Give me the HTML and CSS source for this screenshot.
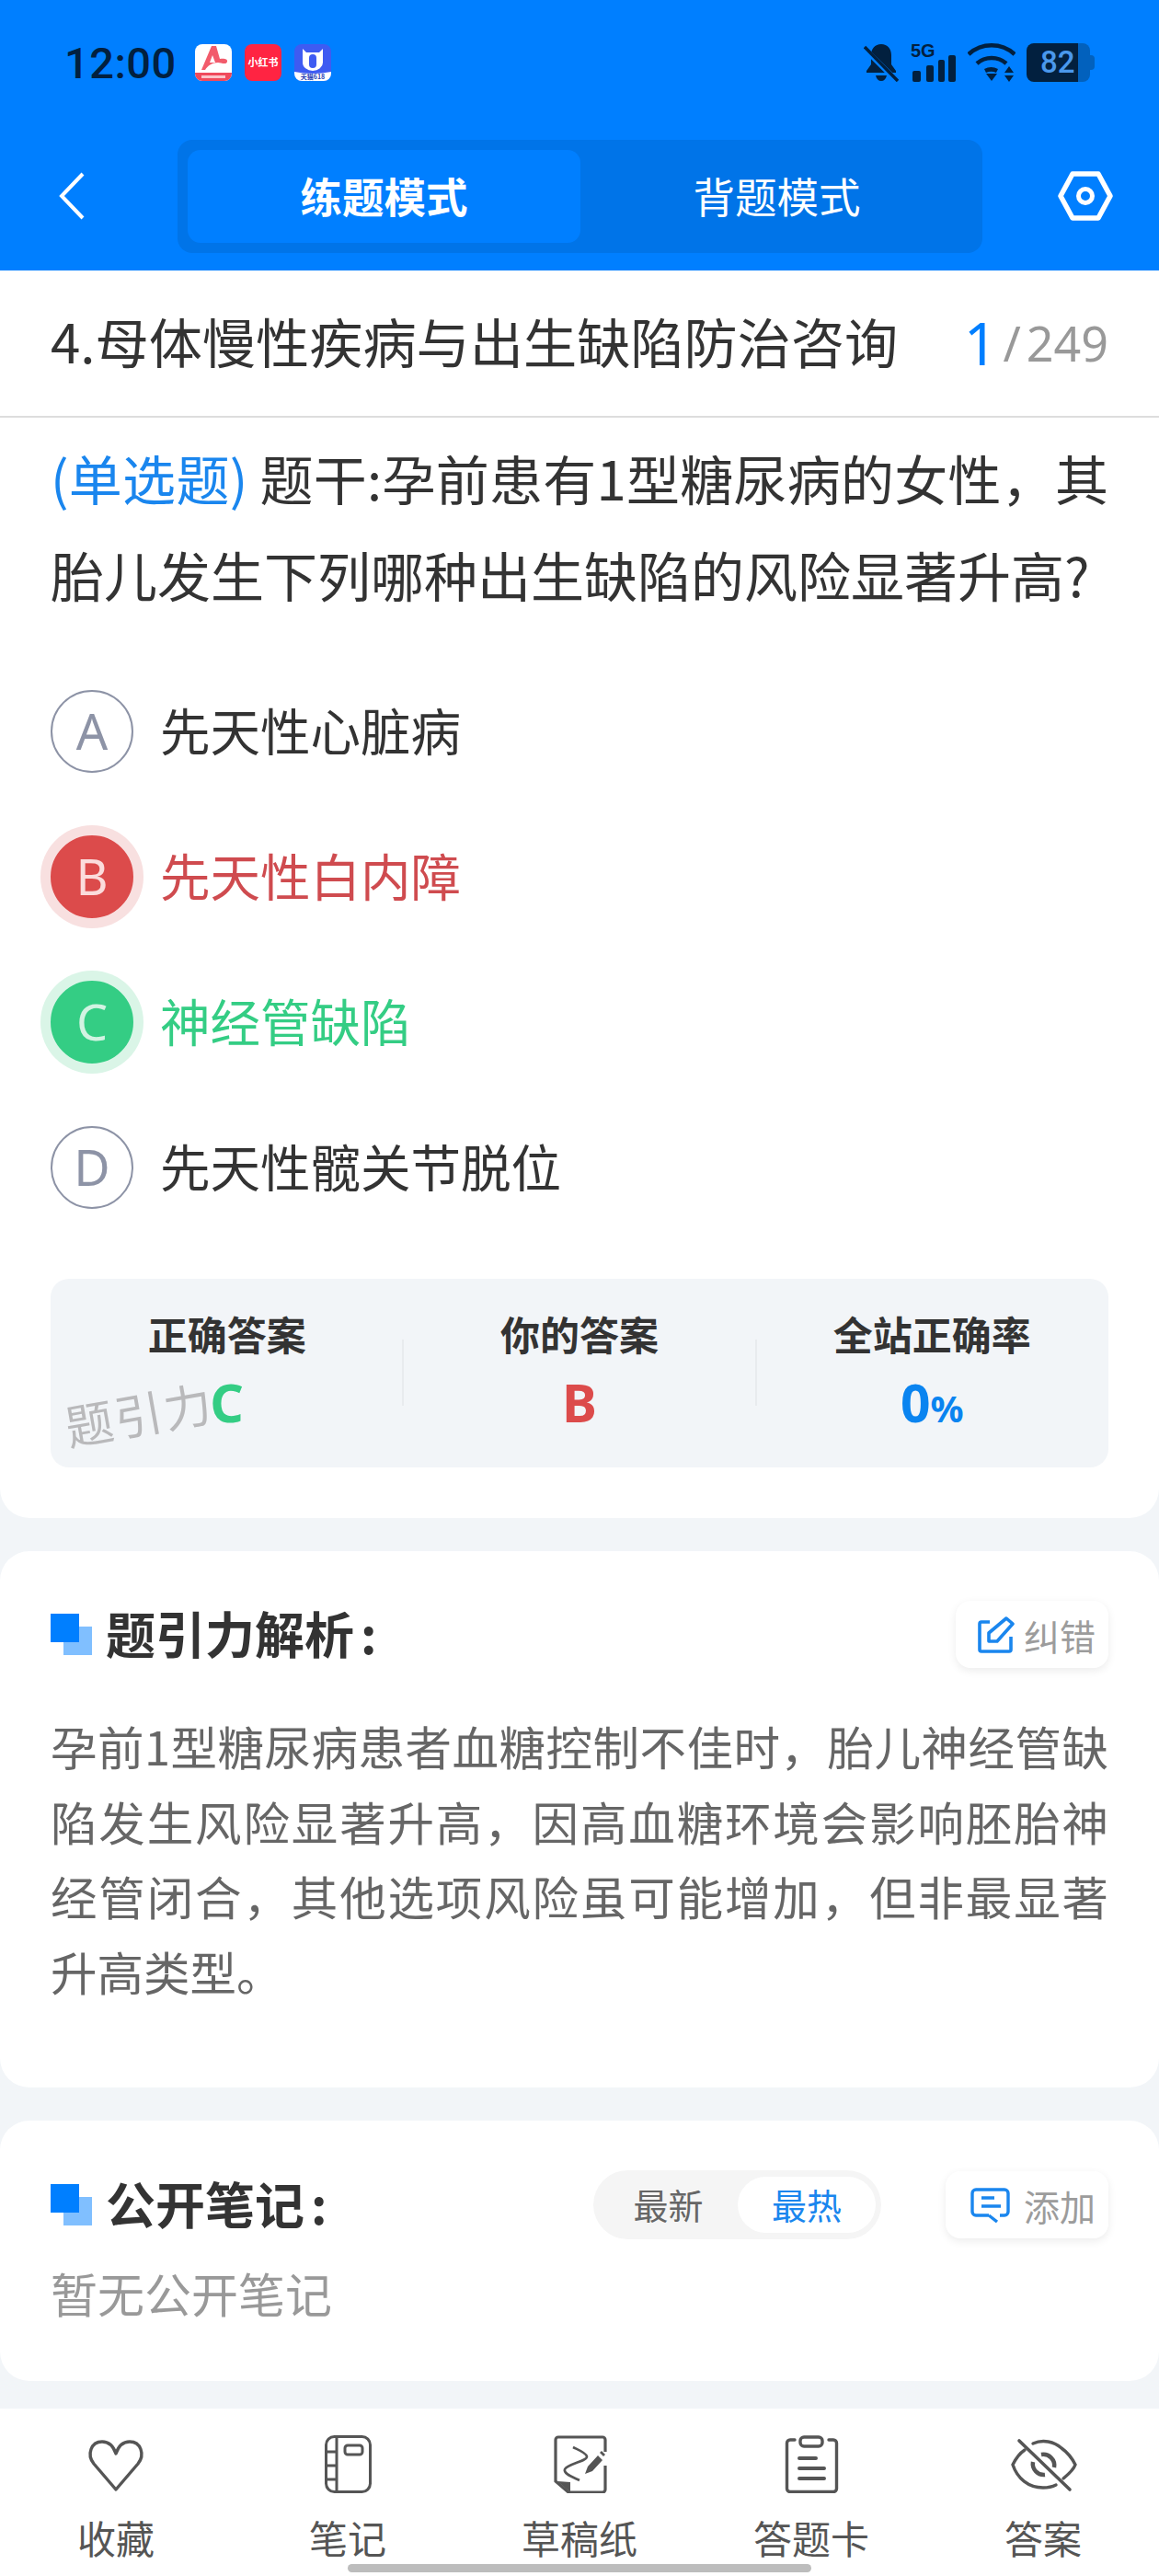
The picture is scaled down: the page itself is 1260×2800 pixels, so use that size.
FILE: index.html
```html
<!DOCTYPE html>
<html lang="zh">
<head>
    <meta charset="UTF-8">
    <meta name="viewport" content="width=device-width, initial-scale=1.0">
    <title>题引力</title>
    <link rel="stylesheet" href="styles.css">
</head>
<body>
    <div class="phone">
        <header class="top">
            <div class="status">
                <span class="time">12:00</span>
                <div class="app-icons">
                    <svg class="app" viewBox="0 0 40 40"><rect width="40" height="40" rx="8" fill="#fff"/><path d="M0 31h40v1a8 8 0 0 1-8 8H8a8 8 0 0 1-8-8z" fill="#f04a5c"/><path d="M7 28 18 2h5l4 14c4-1 9 0 8 3-1 4-7 1-10 1-6 0-11 3-14 8zM19 12l-3 8h6z" fill="#f25b6b" fill-rule="evenodd"/><path d="M7 35.500h26" stroke="#fbc4ca" stroke-width="3"/></svg>
                    <svg class="app" viewBox="0 0 40 40"><rect width="40" height="40" rx="8" fill="#ff2442"/><text x="20" y="24" class="app-label">小红书</text></svg>
                    <svg class="app" viewBox="0 0 40 40"><rect width="40" height="40" rx="8" fill="#3e5bf2"/><path d="M0 30q20 4 40 0v2a8 8 0 0 1-8 8H8a8 8 0 0 1-8-8z" fill="#fff"/><path d="M9 5l4 4h14l4-4v15a11 9 0 0 1-22 0z" fill="#fff"/><rect x="16" y="11" width="8" height="15" rx="4" fill="#3e5bf2"/><text x="20" y="38" class="app-tag">天猫618</text></svg>
                </div>
                <div class="sys-icons">
                    <svg class="bell" viewBox="0 0 38 42"><path d="M19 1c7 0 11 5 11 12v10l5 7v2H3v-2l5-7V13c0-7 4-12 11-12zM13 35h12c-1 4-3 6-6 6s-5-2-6-6z" fill="#02203f"/><path d="M2 7l35 35" stroke="#007fff" stroke-width="6"/><path d="M1 4l36 37" stroke="#02203f" stroke-width="3.400"/></svg>
                    <div class="signal">
                        <span class="net">5G</span>
                        <svg viewBox="0 0 47 29"><rect x="0" y="17" width="9" height="12" rx="2"/><rect x="15" y="11" width="8" height="18" rx="2"/><rect x="28" y="5" width="7" height="24" rx="2"/><rect x="39" y="0" width="8" height="29" rx="2"/></svg>
                    </div>
                    <svg class="wifi" viewBox="0 0 52 42"><g fill="none" stroke="#02203f" stroke-width="4.500"><path d="M1 12c14-13 36-13 50 0"/><path d="M10 22c9-8 23-8 32 0"/><path d="M19 30c4-2 9-2 13 0"/></g><path d="M20 33h12l-6 8zM40 32l5-7 5 7zM40 35h10l-5 7z" fill="#02203f"/></svg>
                    <div class="battery"><span class="level">82</span><span class="rest"></span></div>
                </div>
            </div>
            <div class="mode-bar">
                <svg class="back" viewBox="0 0 28 52"><path d="M26 2 3 26l23 24" fill="none" stroke="#fff" stroke-width="4"/></svg>
                <div class="mode-tabs">
                    <div class="mode-tab on">练题模式</div>
                    <div class="mode-tab">背题模式</div>
                </div>
                <svg class="gear" viewBox="0 0 60 54"><path d="M16 3h28l13 24-13 24H16L3 27z" fill="none" stroke="#fff" stroke-width="5.500" stroke-linejoin="round"/><circle cx="30" cy="27" r="7.500" fill="none" stroke="#fff" stroke-width="5"/></svg>
            </div>
        </header>

        <main class="content">
            <section class="card question-card">
                <div class="chapter">
                    <h1>4.母体慢性疾病与出生缺陷防治咨询</h1>
                    <div class="count"><b>1</b><i>/</i>249</div>
                </div>
                <p class="stem"><span class="type">(单选题)</span> 题干:孕前患有1型糖尿病的女性，其胎儿发生下列哪种出生缺陷的风险显著升高?</p>
                <ul class="options">
                    <li class="option"><span class="letter">A</span><span class="option-text">先天性心脏病</span></li>
                    <li class="option wrong"><span class="letter">B</span><span class="option-text">先天性白内障</span></li>
                    <li class="option right"><span class="letter">C</span><span class="option-text">神经管缺陷</span></li>
                    <li class="option"><span class="letter">D</span><span class="option-text">先天性髋关节脱位</span></li>
                </ul>
                <div class="stats">
                    <div class="stat">
                        <div class="stat-name">正确答案</div>
                        <div class="stat-value green">C</div>
                        <span class="watermark">题引力</span>
                    </div>
                    <div class="stat">
                        <div class="stat-name">你的答案</div>
                        <div class="stat-value red">B</div>
                    </div>
                    <div class="stat">
                        <div class="stat-name">全站正确率</div>
                        <div class="stat-value blue">0<small>%</small></div>
                    </div>
                </div>
            </section>

            <section class="card analysis-card">
                <div class="card-head">
                    <h2><span class="mark"></span><span class="head-text">题引力解析<span class="colon">:</span></span></h2>
                    <button class="small-btn">
                        <svg class="fix-icon" viewBox="0 0 40 40"><path d="M13 6H4a2 2 0 0 0-2 2v28a2 2 0 0 0 2 2h30a2 2 0 0 0 2-2V22" fill="none" stroke="#1a86ee" stroke-width="3.600"/><path d="M12 27V18L31 2l7 6-17 19z" fill="none" stroke="#1a86ee" stroke-width="3.600" stroke-linejoin="round"/></svg>
                        纠错
                    </button>
                </div>
                <p class="analysis">孕前1型糖尿病患者血糖控制不佳时，胎儿神经管缺陷发生风险显著升高，因高血糖环境会影响胚胎神经管闭合，其他选项风险虽可能增加，但非最显著升高类型。</p>
            </section>

            <section class="card notes-card">
                <div class="card-head">
                    <h2><span class="mark"></span><span class="head-text">公开笔记<span class="colon">:</span></span></h2>
                    <div class="sort">
                        <span>最新</span>
                        <span class="on">最热</span>
                    </div>
                    <button class="small-btn add-btn">
                        <svg class="add-icon" viewBox="0 0 43 38"><path d="M20 30H6a4 4 0 0 1-4-4V6a4 4 0 0 1 4-4h31a4 4 0 0 1 4 4v20a4 4 0 0 1-4 4h-5M20 30l9 7" fill="none" stroke="#1a86ee" stroke-width="3.400"/><path d="M12 11h14M12 20h21" stroke="#1a86ee" stroke-width="3.400"/></svg>
                        添加
                    </button>
                </div>
                <p class="empty">暂无公开笔记</p>
            </section>
        </main>

        <nav class="tabbar">
            <div class="tab">
                <svg viewBox="0 0 64 64"><path d="M32 60 8 32C0 22 5 8 17 8c7 0 12 4 15 13 3-9 8-13 15-13 12 0 17 14 9 24z" fill="none" stroke="#555" stroke-width="3.400" stroke-linejoin="round"/></svg>
                <span>收藏</span>
            </div>
            <div class="tab">
                <svg viewBox="0 0 64 64"><rect x="8.500" y="2.500" width="48" height="60" rx="9" fill="none" stroke="#555" stroke-width="3"/><path d="M20 3v59M9 19h11M9 34h11M9 49h11" stroke="#555" stroke-width="3"/><rect x="29" y="12" width="19" height="10" rx="3" fill="none" stroke="#555" stroke-width="3"/></svg>
                <span>笔记</span>
            </div>
            <div class="tab">
                <svg viewBox="0 0 64 64"><path d="M60 19V6a3 3 0 0 0-3-3H9a3 3 0 0 0-3 3v45l14 12h37a3 3 0 0 0 3-3V34" fill="none" stroke="#555" stroke-width="3.200"/><path d="M8 51l14 1v11z" fill="#555"/><path d="M25 14c6 3 14 6 15 10 1 5-21 8-24 14-2 5 10 9 16 12" fill="none" stroke="#555" stroke-width="2.600"/><path d="M38 43l3-8 11-12 5 5-11 12zM54 20l2-2 4 4-2 2z" fill="#555"/></svg>
                <span>草稿纸</span>
            </div>
            <div class="tab">
                <svg viewBox="0 0 64 64"><path d="M14 6h-5a3.500 3.500 0 0 0-3.500 3.500V59a3.500 3.500 0 0 0 3.500 3.500h47a3.500 3.500 0 0 0 3.500-3.500V9.500A3.500 3.500 0 0 0 56 6h-5" fill="none" stroke="#555" stroke-width="3.400" stroke-linecap="round"/><rect x="20" y="3" width="24" height="10" rx="4" fill="none" stroke="#555" stroke-width="3.400"/><path d="M19 26h18M19 37h27M19 48h27" stroke="#555" stroke-width="4" stroke-linecap="round"/></svg>
                <span>答题卡</span>
            </div>
            <div class="tab">
                <svg class="eye" viewBox="0 0 64 64"><path d="M12 17C6 21 2 27-1 33c5 15 17 25 33 25 5 0 10-1 14-3M21 10C32 5 44 8 52 15c7 5 12 12 15 18-2 6-7 10-13 15" fill="none" stroke="#555" stroke-width="3.400" stroke-linecap="round"/><path d="M30 22a12 12 0 0 1 14 14M21 30a12 12 0 0 0 13 14" fill="none" stroke="#555" stroke-width="4.500"/><path d="M6 7l55 53" stroke="#555" stroke-width="3.600" stroke-linecap="round"/></svg>
                <span>答案</span>
            </div>
            <div class="home-bar"></div>
        </nav>
    </div>
</body>
</html>
```
FILE: styles.css
```css
:root {
    --blue: #007fff;
    --bg: #f2f5f8;
    --text: #333;
    --red: #dc4b4b;
    --green: #34cd84;
}

* {
    box-sizing: border-box;
    margin: 0;
    padding: 0;
}

body {
    font-family: "Noto Sans CJK SC", "Noto Sans", sans-serif;
    background-color: var(--bg);
    color: var(--text);
}

.phone {
    width: 1260px;
    height: 2800px;
    display: flex;
    flex-direction: column;
    overflow: hidden;
}

/* 顶部 */
.top {
    height: 294px;
    background-color: var(--blue);
    flex: none;
}

.status {
    height: 136px;
    padding: 0 70px;
    display: flex;
    align-items: center;
}

.time {
    width: 142px;
    flex: none;
    font-family: Roboto, sans-serif;
    font-size: 47px;
    font-weight: 500;
    line-height: 1;
    letter-spacing: 0.5px;
    color: #02203f;
}

.app-icons {
    display: flex;
    gap: 14px;
}

.app {
    width: 40px;
    height: 40px;
    display: block;
}

.app-label {
    font-size: 11px;
    fill: #fff;
    font-weight: 700;
    text-anchor: middle;
}

.app-tag {
    font-size: 7px;
    fill: #2b3fb5;
    font-weight: 700;
    text-anchor: middle;
}

.sys-icons {
    margin-left: auto;
    display: flex;
    align-items: flex-end;
    height: 42px;
}

.bell {
    width: 38px;
    height: 42px;
}

.signal {
    position: relative;
    width: 47px;
    height: 42px;
    margin-left: 15px;
    display: flex;
    align-items: flex-end;
}

.signal svg {
    width: 47px;
    height: 29px;
    fill: #02203f;
}

.net {
    position: absolute;
    left: -2px;
    top: 0;
    font-family: "Liberation Sans", sans-serif;
    font-size: 20px;
    font-weight: 700;
    line-height: 17px;
    color: #02203f;
}

.wifi {
    width: 52px;
    height: 42px;
    margin-left: 13px;
}

.battery {
    display: flex;
    width: 69px;
    height: 42px;
    margin-left: 12px;
    margin-right: 5px;
    position: relative;
}

.level {
    width: 56px;
    background-color: #02203f;
    border-radius: 8px 0 0 8px;
    color: #4a98ec;
    font-family: Roboto, sans-serif;
    font-size: 33px;
    font-weight: 500;
    line-height: 42px;
    padding-left: 15px;
}

.rest {
    flex: 1;
    background-color: #0261bd;
    border-radius: 0 8px 8px 0;
}

.rest::after {
    content: "";
    position: absolute;
    right: -5px;
    top: 13px;
    width: 5px;
    height: 16px;
    background-color: #0261bd;
    border-radius: 0 4px 4px 0;
}

.mode-bar {
    height: 158px;
    display: flex;
    align-items: flex-start;
    padding-top: 16px;
    padding-left: 64px;
}

.back {
    width: 28px;
    height: 52px;
    margin-top: 35px;
    flex: none;
}

.mode-tabs {
    width: 875px;
    height: 123px;
    margin-left: 101px;
    padding: 11px;
    background-color: #0074e8;
    border-radius: 16px;
    display: flex;
}

.mode-tab {
    width: 427px;
    height: 101px;
    flex: none;
    color: #fff;
    font-size: 45.500px;
    line-height: 98px;
    text-align: center;
    border-radius: 14px;
}

.mode-tab.on {
    background-color: var(--blue);
    font-weight: 700;
}

.gear {
    width: 60px;
    height: 54px;
    margin-top: 34px;
    margin-left: 82px;
    flex: none;
}

/* 内容 */
.content {
    flex: 1;
    display: flex;
    flex-direction: column;
    gap: 36px;
    min-height: 0;
}

.card {
    background-color: #fff;
    border-radius: 32px;
    padding: 0 55px;
}

.question-card {
    border-radius: 0 0 32px 32px;
    height: 1356px;
}

.chapter {
    height: 160px;
    margin: 0 -55px;
    padding: 0 55px;
    border-bottom: 2px solid #ddd;
    display: flex;
    align-items: center;
    justify-content: space-between;
}

.chapter h1 {
    font-size: 58.200px;
    font-weight: 400;
    line-height: 1;
    margin-bottom: 6px;
    color: var(--text);
    white-space: nowrap;
}

.count {
    color: #999;
    font-family: "Noto Sans", sans-serif;
    font-size: 52px;
    line-height: 1;
    display: flex;
    align-items: center;
}

.count b {
    color: var(--blue);
    font-weight: 400;
    font-size: 64px;
}

.count i {
    font-style: normal;
    margin: 0 6px;
}

.stem {
    font-size: 58px;
    line-height: 105px;
    padding-top: 13px;
    text-align: justify;
}

.type {
    color: #1a86ee;
}

.options {
    list-style: none;
    margin-top: 39px;
}

.option {
    height: 158px;
    display: flex;
    align-items: center;
    font-size: 54.500px;
    gap: 29px;
}

.option-text {
    margin-bottom: 6px;
}

.letter {
    width: 90px;
    height: 90px;
    border: 2px solid #8d93a6;
    border-radius: 50%;
    color: #8d93a6;
    font-family: "Noto Sans", sans-serif;
    font-size: 54px;
    line-height: 84px;
    text-align: center;
    flex: none;
}

.wrong {
    color: #cf4b4f;
}

.wrong .letter {
    background-color: var(--red);
    border-color: var(--red);
    color: #fbdcdc;
    box-shadow: 0 0 0 11px #f8e0e0;
}

.right {
    color: var(--green);
}

.right .letter {
    background-color: var(--green);
    border-color: var(--green);
    color: #d2f3e2;
    box-shadow: 0 0 0 11px #daf5e7;
}

.stats {
    margin-top: 42px;
    height: 205px;
    background-color: var(--bg);
    border-radius: 20px;
    display: flex;
    align-items: flex-start;
    padding-top: 33px;
}

.stat {
    flex: 1;
    text-align: center;
    position: relative;
    height: 95px;
}

.stat + .stat::before {
    content: "";
    position: absolute;
    left: -1px;
    top: 33px;
    bottom: -10px;
    width: 2px;
    background-color: #e8ebee;
}

.stat-name {
    font-size: 43px;
    font-weight: 700;
    line-height: 52px;
}

.stat-value {
    font-family: "Noto Sans", sans-serif;
    font-size: 57px;
    font-weight: 700;
    line-height: 72px;
    margin-top: 13px;
}

.stat-value small {
    font-size: 40px;
}

.green {
    color: var(--green);
}

.red {
    color: var(--red);
}

.blue {
    color: #0a84f0;
}

.watermark {
    position: absolute;
    left: 15px;
    top: 87px;
    color: #b9b9bb;
    font-size: 52px;
    line-height: 1;
    white-space: nowrap;
    transform: rotate(-10deg);
    letter-spacing: 2px;
}

.card-head {
    display: flex;
    align-items: center;
    min-height: 73px;
}

.card-head h2 {
    font-size: 54px;
    font-weight: 700;
    line-height: 1;
    display: flex;
    align-items: center;
    gap: 16px;
}

.head-text {
    margin-bottom: 4px;
    margin-left: -1px;
}

.colon {
    margin-left: 7px;
}

.mark {
    width: 45px;
    height: 45px;
    flex: none;
    background:
        linear-gradient(var(--blue), var(--blue)) 0 0 / 31px 31px no-repeat,
        linear-gradient(#80bfff, #80bfff) 14px 14px / 31px 31px no-repeat;
}

.small-btn {
    margin-left: auto;
    height: 73px;
    padding: 0 14px 0 24px;
    background-color: #fff;
    border: none;
    border-radius: 16px;
    box-shadow: 0 3px 10px rgba(0, 0, 0, 0.08);
    display: flex;
    align-items: center;
    gap: 10px;
    color: #9c9c9c;
    font-family: inherit;
    font-size: 39px;
}

.fix-icon {
    width: 40px;
    height: 40px;
}

.add-btn {
    padding-left: 27px;
    padding-right: 14px;
    gap: 15px;
}

.add-icon {
    width: 43px;
    height: 38px;
}

.analysis-card {
    height: 583px;
    padding-top: 54px;
}

.analysis {
    margin-top: 44px;
    color: #666;
    font-size: 50.500px;
    line-height: 81.500px;
    text-align: justify;
}

.notes-card {
    height: 283px;
    padding-top: 54px;
}

.sort {
    margin-left: auto;
    width: 313px;
    height: 75px;
    padding: 7px 6px;
    background-color: #f5f5f5;
    border-radius: 38px;
    display: flex;
    font-size: 38px;
    color: #666;
    text-align: center;
    line-height: 59px;
}

.sort span {
    flex: 1;
}

.sort .on {
    background-color: #fff;
    color: #1a86ee;
    border-radius: 31px;
    flex: none;
    width: 150px;
}

.sort + .small-btn {
    margin-left: 70px;
}

.empty {
    margin-top: 22px;
    color: #999;
    font-size: 51px;
    line-height: 72px;
}

/* 底部 */
.tabbar {
    height: 182px;
    flex: none;
    background-color: #fff;
    position: relative;
    display: flex;
    padding-top: 28px;
}

.tab {
    flex: 1;
    display: flex;
    flex-direction: column;
    align-items: center;
    color: #555;
    font-size: 42px;
    line-height: 48px;
}

.tab svg {
    width: 64px;
    height: 64px;
    margin-bottom: 24px;
}

.tab .eye {
    overflow: visible;
}

.home-bar {
    position: absolute;
    left: 378px;
    bottom: 4px;
    width: 504px;
    height: 9px;
    background-color: #bdbdbd;
    border-radius: 5px;
}
```
